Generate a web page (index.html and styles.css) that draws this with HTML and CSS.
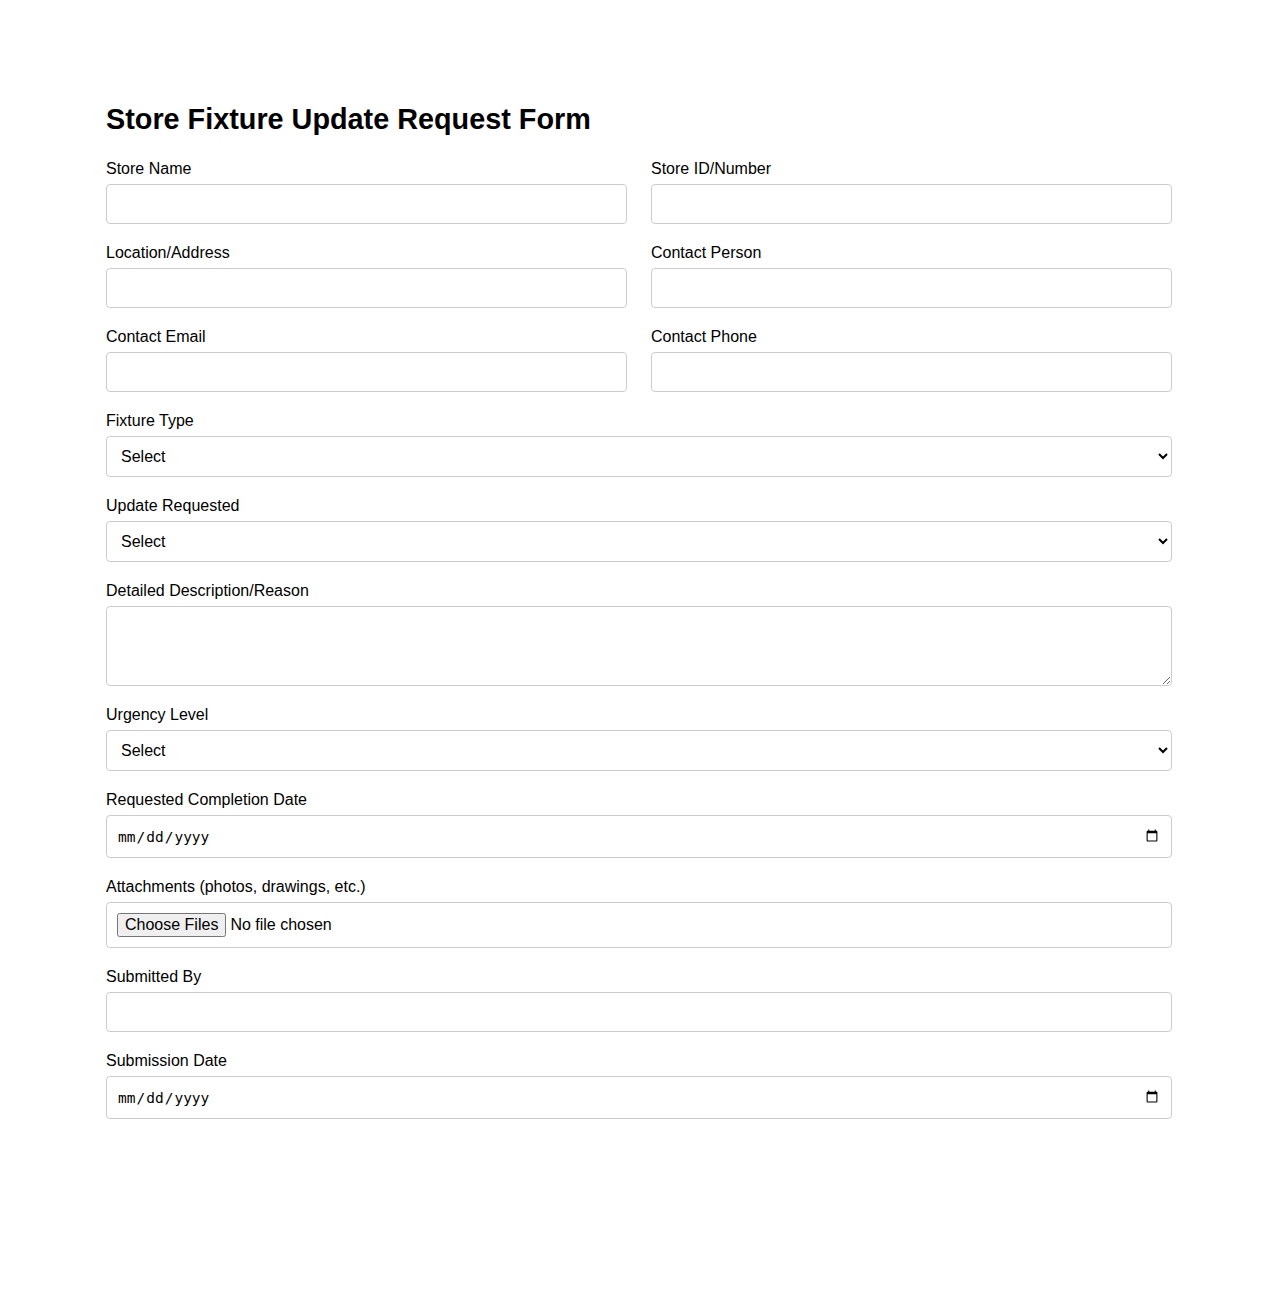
FILE: index.html
```html
<!DOCTYPE html>
<html lang="en">
<head>
    <meta charset="UTF-8">
    <meta name="viewport" content="width=device-width, initial-scale=1.0">
    <title>Store Fixture Update Request Form</title>
    <link rel="stylesheet" href="styles.css">
</head>
<body>
    <div class="container">
        <h1>Store Fixture Update Request Form</h1>
        <form class="request-form">
            <div class="row">
                <div class="field">
                    <label for="store-name">Store Name</label>
                    <input type="text" id="store-name">
                </div>
                <div class="field">
                    <label for="store-id">Store ID/Number</label>
                    <input type="text" id="store-id">
                </div>
            </div>
            <div class="row">
                <div class="field">
                    <label for="location">Location/Address</label>
                    <input type="text" id="location">
                </div>
                <div class="field">
                    <label for="contact-person">Contact Person</label>
                    <input type="text" id="contact-person">
                </div>
            </div>
            <div class="row">
                <div class="field">
                    <label for="contact-email">Contact Email</label>
                    <input type="email" id="contact-email">
                </div>
                <div class="field">
                    <label for="contact-phone">Contact Phone</label>
                    <input type="tel" id="contact-phone">
                </div>
            </div>

            <div class="field">
                <label for="fixture-type">Fixture Type</label>
                <select id="fixture-type">
                    <option>Select</option>
                    <option>Shelving</option>
                    <option>Display Case</option>
                    <option>Checkout Counter</option>
                    <option>Signage</option>
                    <option>Lighting</option>
                </select>
            </div>
            <div class="field">
                <label for="update-type">Update Requested</label>
                <select id="update-type">
                    <option>Select</option>
                    <option>Repair</option>
                    <option>Replacement</option>
                    <option>Relocation</option>
                    <option>New Installation</option>
                </select>
            </div>
            <div class="field">
                <label for="description">Detailed Description/Reason</label>
                <textarea id="description"></textarea>
            </div>
            <div class="field">
                <label for="urgency">Urgency Level</label>
                <select id="urgency">
                    <option>Select</option>
                    <option>Low</option>
                    <option>Medium</option>
                    <option>High</option>
                </select>
            </div>
            <div class="field">
                <label for="completion-date">Requested Completion Date</label>
                <input type="date" id="completion-date" class="date-input">
            </div>
            <div class="field">
                <label for="attachments">Attachments (photos, drawings, etc.)</label>
                <input type="file" id="attachments" multiple>
            </div>
            <div class="field">
                <label for="submitted-by">Submitted By</label>
                <input type="text" id="submitted-by">
            </div>
            <div class="field">
                <label for="submission-date">Submission Date</label>
                <input type="date" id="submission-date" class="date-input">
            </div>
        </form>
    </div>
</body>
</html>
```

FILE: styles.css
```css
body {
    margin: 0;
    font-family: "Liberation Sans", Arial, sans-serif;
    color: #000;
    background: #fff;
}
.container {
    max-width: 1066px;
    margin: 0 auto;
    padding: 103px 0 120px;
}
h1 {
    font-size: 28.8px;
    margin: 0 0 24px;
}
.row {
    display: grid;
    grid-template-columns: 1fr 1fr;
    column-gap: 24px;
}
.field {
    margin-bottom: 20px;
}
.field label {
    display: block;
    font-size: 16px;
    margin-bottom: 6px;
}
.field input,
.field select,
.field textarea {
    display: block;
    width: 100%;
    box-sizing: border-box;
    padding: 10px;
    font-family: inherit;
    font-size: 16px;
    border: 1px solid #ccc;
    border-radius: 4px;
    background: #fff;
}
.field textarea {
    height: 80px;
}
/* date fields keep a monospace face */
.field .date-input {
    height: 43px;
    font-family: "DejaVu Sans Mono", monospace;
    font-size: 14.5px;
}
```
